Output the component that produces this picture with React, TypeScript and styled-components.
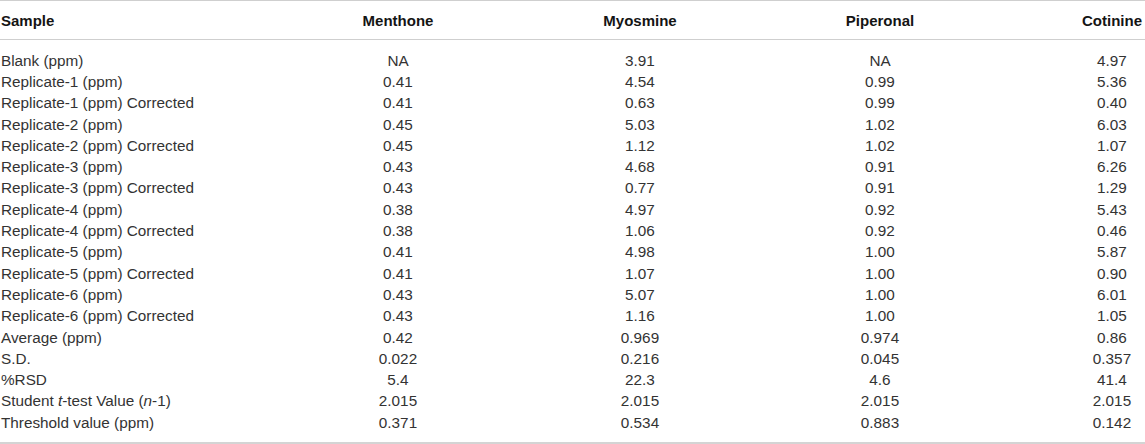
import styled, { createGlobalStyle } from "styled-components";

type DataRow = {
  label: React.ReactNode;
  values: string[];
};

const GlobalStyle = createGlobalStyle`
  html, body {
    margin: 0;
    padding: 0;
    background: #ffffff;
  }
  body {
    font-family: "Liberation Sans", Arial, Helvetica, sans-serif;
  }
`;

const Table = styled.div`
  width: 1145px;
  border-top: 1px solid #cfcfcf;
  border-bottom: 2px solid #d4d4d4;
  color: #333333;
`;

const Row = styled.div<{ $header?: boolean }>`
  display: grid;
  grid-template-columns: 197px 402px 82px 398px 66px;
  align-items: center;
  height: ${(p) => (p.$header ? "38px" : "21.3px")};
  font-size: ${(p) => (p.$header ? "15px" : "15.3px")};
  font-weight: ${(p) => (p.$header ? 700 : 400)};
  color: ${(p) => (p.$header ? "#141414" : "#333333")};
  border-bottom: ${(p) => (p.$header ? "1px solid #cfcfcf" : "none")};
`;

const Body = styled.div`
  padding: 10px 0 8.6px;
`;

const Cell = styled.div<{ $first?: boolean }>`
  text-align: ${(p) => (p.$first ? "left" : "center")};
  white-space: nowrap;
  padding-left: ${(p) => (p.$first ? "1px" : "0")};
`;

const headers = ["Sample", "Menthone", "Myosmine", "Piperonal", "Cotinine"];

const rows: DataRow[] = [
  { label: "Blank (ppm)", values: ["NA", "3.91", "NA", "4.97"] },
  { label: "Replicate-1 (ppm)", values: ["0.41", "4.54", "0.99", "5.36"] },
  { label: "Replicate-1 (ppm) Corrected", values: ["0.41", "0.63", "0.99", "0.40"] },
  { label: "Replicate-2 (ppm)", values: ["0.45", "5.03", "1.02", "6.03"] },
  { label: "Replicate-2 (ppm) Corrected", values: ["0.45", "1.12", "1.02", "1.07"] },
  { label: "Replicate-3 (ppm)", values: ["0.43", "4.68", "0.91", "6.26"] },
  { label: "Replicate-3 (ppm) Corrected", values: ["0.43", "0.77", "0.91", "1.29"] },
  { label: "Replicate-4 (ppm)", values: ["0.38", "4.97", "0.92", "5.43"] },
  { label: "Replicate-4 (ppm) Corrected", values: ["0.38", "1.06", "0.92", "0.46"] },
  { label: "Replicate-5 (ppm)", values: ["0.41", "4.98", "1.00", "5.87"] },
  { label: "Replicate-5 (ppm) Corrected", values: ["0.41", "1.07", "1.00", "0.90"] },
  { label: "Replicate-6 (ppm)", values: ["0.43", "5.07", "1.00", "6.01"] },
  { label: "Replicate-6 (ppm) Corrected", values: ["0.43", "1.16", "1.00", "1.05"] },
  { label: "Average (ppm)", values: ["0.42", "0.969", "0.974", "0.86"] },
  { label: "S.D.", values: ["0.022", "0.216", "0.045", "0.357"] },
  { label: "%RSD", values: ["5.4", "22.3", "4.6", "41.4"] },
  {
    label: (
      <>
        Student <i>t</i>-test Value (<i>n</i>-1)
      </>
    ),
    values: ["2.015", "2.015", "2.015", "2.015"],
  },
  { label: "Threshold value (ppm)", values: ["0.371", "0.534", "0.883", "0.142"] },
];

function App() {
  return (
    <>
      <GlobalStyle />
      <Table>
        <Row $header>
          {headers.map((h, i) => (
            <Cell key={h} $first={i === 0}>
              {h}
            </Cell>
          ))}
        </Row>
        <Body>
          {rows.map((r, idx) => (
            <Row key={idx}>
              <Cell $first>{r.label}</Cell>
              {r.values.map((v, i) => (
                <Cell key={i}>{v}</Cell>
              ))}
            </Row>
          ))}
        </Body>
      </Table>
    </>
  );
}

export default App;
